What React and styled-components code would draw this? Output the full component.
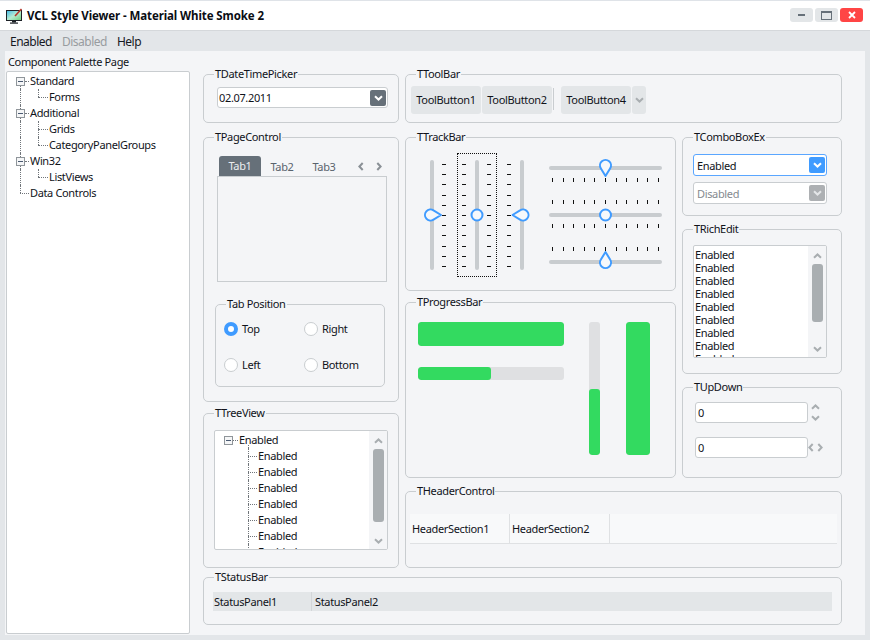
import React from 'react'
import styled, { createGlobalStyle } from 'styled-components'

const BLUE = '#3f9bff'
const LINE = '#c9cdd0'
const PANEL = '#f4f5f7'
const SLATE = '#667079'

const GlobalStyle = createGlobalStyle`
  html, body { margin: 0; padding: 0; background: #e3e6e9; }
  body {
    font-family: "Noto Sans", "Open Sans", sans-serif;
    font-size: 11px;
    letter-spacing: -0.35px;
    color: #10131a;
  }
`

const Window = styled.div`
  width: 870px;
  height: 640px;
  display: flex;
  flex-direction: column;
  background: #e3e6e9;
  overflow: hidden;
`

const TitleBar = styled.div`
  height: 31px;
  flex: none;
  display: flex;
  align-items: center;
  background: #fff;
  border-top: 1px solid #dfe3e8;
  border-bottom: 1px solid #d5d8db;
  padding: 0 7px 0 6px;
  box-sizing: border-box;
`

const Caption = styled.span`
  font-weight: 700;
  font-size: 11.5px;
  margin-left: 4px;
  letter-spacing: -0.1px;
  color: #0a0d14;
`

const WinButtons = styled.div`
  margin-left: auto;
  display: flex;
  gap: 2px;
  margin-top: -1px;
`

const WinButton = styled.div`
  width: 23px;
  height: 14px;
  border-radius: 3px;
  background: ${p => (p.$close ? '#ff4545' : '#e3e6e8')};
  display: flex;
  align-items: center;
  justify-content: center;
`

const MenuBar = styled.div`
  height: 20px;
  flex: none;
  display: flex;
  align-items: center;
  padding-left: 10px;
  gap: 10px;
  font-size: 12px;
  letter-spacing: -0.5px;
`

const MenuItem = styled.span`
  color: ${p => (p.$disabled ? '#989ca0' : '#15181f')};
`

const Client = styled.div`
  flex: 1;
  margin: 0 5px 5px;
  background: ${PANEL};
  display: flex;
  min-height: 0;
`

const Palette = styled.div`
  width: 185px;
  flex: none;
  display: flex;
  flex-direction: column;
`

const PaletteLabel = styled.div`
  height: 20px;
  line-height: 22px;
  padding-left: 3px;
  white-space: nowrap;
`

const TreeBox = styled.div`
  display: flex;
  overflow: hidden;
  background: #fff;
  border: 1px solid ${LINE};
  border-radius: 2px;
  box-sizing: border-box;
  margin-left: ${p => p.$inset || 0}px;
  width: ${p => p.$w}px;
  height: ${p => p.$h}px;
  flex: none;
`

const TreeList = styled.div`
  flex: 1;
  min-width: 0;
  overflow: hidden;
  padding-top: 1px;
`

const TreeRow = styled.div`
  position: relative;
  flex: none;
  height: 16px;
  line-height: 16px;
  padding-left: ${p => p.$x}px;
  white-space: nowrap;
`

const VGuide = styled.i`
  position: absolute;
  width: 0;
  border-left: 1px dotted #70757a;
`

const HGuide = styled.i`
  position: absolute;
  top: 8px;
  height: 0;
  border-top: 1px dotted #70757a;
`

const Expander = styled.i`
  position: absolute;
  top: 4px;
  width: 9px;
  height: 9px;
  box-sizing: border-box;
  border: 1px solid #8f959a;
  background: linear-gradient(#4a5a72, #4a5a72) center / 5px 1px no-repeat #f5f6f7;
`

const ScrollBar = styled.div`
  width: 18px;
  flex: none;
  display: flex;
  flex-direction: column;
  align-items: center;
  padding: 7px 0 5px;
  box-sizing: border-box;
  background: ${PANEL};
`

const ScrollThumb = styled.div`
  width: 11px;
  height: ${p => p.$h}px;
  margin-top: 5px;
  border-radius: 3px;
  background: #a9aeb1;
`

const BarSpring = styled.div`
  flex: 1;
`

const Main = styled.div`
  margin-left: 13px;
  padding-top: 23px;
  width: 639px;
  display: flex;
  flex-direction: column;
  gap: 9px;
`

const TopRow = styled.div`
  display: flex;
  gap: 6px;
`

const MiddleRow = styled(TopRow)`
  margin-top: 14px;
`

const Column = styled.div`
  width: ${p => p.$w}px;
  flex: none;
  display: flex;
  flex-direction: column;
`

const Group = styled.div`
  position: relative;
  flex: none;
  box-sizing: border-box;
  height: ${p => p.$h}px;
  margin-top: ${p => p.$mt || 0}px;
  border: 1px solid ${LINE};
  border-radius: 5px;
  padding: ${p => p.$pad};
`

const Legend = styled.span`
  position: absolute;
  top: -9px;
  left: 10px;
  padding: 0 1px;
  line-height: 15px;
  background: ${PANEL};
  white-space: nowrap;
`

const Field = styled.div`
  display: flex;
  align-items: center;
  justify-content: space-between;
  box-sizing: border-box;
  width: ${p => p.$w}px;
  height: ${p => p.$h}px;
  margin-top: ${p => p.$mt || 0}px;
  background: #fff;
  border: 1px solid ${p => (p.$focus ? '#5aa6ff' : LINE)};
  border-radius: 3px;
  padding: 0 1px 0 ${p => p.$pl || 3}px;
  color: ${p => (p.$disabled ? '#858a8f' : 'inherit')};
`

const DropButton = styled.div`
  width: 16px;
  height: 16px;
  flex: none;
  border-radius: 2px;
  background: ${p => p.$bg};
  display: flex;
  align-items: center;
  justify-content: center;
`

const TabStrip = styled.div`
  display: flex;
  align-items: flex-end;
  height: 20px;
  margin-left: 4px;
`

const Tab = styled.div`
  width: 42px;
  height: 20px;
  line-height: ${p => (p.$active ? 20 : 22)}px;
  text-align: center;
  border-radius: 3px 3px 0 0;
  background: ${p => (p.$active ? SLATE : 'transparent')};
  color: ${p => (p.$active ? '#eceef0' : '#59636d')};
`

const TabArrows = styled.div`
  display: flex;
  align-items: center;
  gap: 12px;
  height: 20px;
  margin-left: 13px;
`

const TabPage = styled.div`
  box-sizing: border-box;
  width: 170px;
  height: 106px;
  margin-left: 2px;
  border: 1px solid ${LINE};
`

const RadioGroup = styled(Group)`
  width: 170px;
  display: grid;
  grid-template-columns: 80px 80px;
  grid-auto-rows: 14px;
  row-gap: 22px;
`

const RadioItem = styled.label`
  display: flex;
  align-items: flex-start;
  gap: 4px;
  line-height: 13px;
  white-space: nowrap;
`

const Radio = styled.span`
  width: 14px;
  height: 14px;
  flex: none;
  box-sizing: border-box;
  border-radius: 50%;
  border: ${p => (p.$on ? `4px solid ${BLUE}` : `1px solid ${LINE}`)};
  background: #fff;
`

const ToolRow = styled.div`
  display: flex;
  gap: 1px;
`

const ToolButton = styled.div`
  width: ${p => p.$w || 70}px;
  height: 28px;
  box-sizing: border-box;
  padding-bottom: 1px;
  border-radius: 3px;
  background: #e3e6e8;
  display: flex;
  align-items: center;
  justify-content: center;
  white-space: nowrap;
`

const ToolSeparator = styled.div`
  width: 1px;
  height: 22px;
  margin: 2px 6px 0 0;
  background: ${LINE};
`

const TrackRow = styled.div`
  display: flex;
  align-items: flex-start;
`

const FocusBox = styled.div`
  width: 40px;
  height: 124px;
  box-sizing: border-box;
  border: 1px dotted #111;
  margin: 0 6px 0 7px;
  display: flex;
  align-items: center;
`

const HTracks = styled.div`
  margin: 5px 0 0 12px;
  display: flex;
  flex-direction: column;
  gap: 14px;
`

const Drawing = styled.svg`
  display: block;
  flex: none;
`

const ProgressRow = styled.div`
  display: flex;
  align-items: flex-start;
`

const ProgressLeft = styled.div`
  width: 146px;
  display: flex;
  flex-direction: column;
  gap: 21px;
`

const ProgressTrack = styled.div`
  overflow: hidden;
  flex: none;
  display: flex;
  flex-direction: ${p => (p.$vertical ? 'column' : 'row')};
  justify-content: flex-end;
  width: ${p => p.$w};
  height: ${p => p.$h}px;
  margin-left: ${p => p.$ml || 0}px;
  border-radius: 3px;
  background: #dfe0e2;
`

const ProgressFill = styled.div`
  background: #33da60;
  border-radius: 3px;
  flex: none;
  margin-right: auto;
`

const RichText = styled.div`
  flex: 1;
  min-width: 0;
  overflow: hidden;
  padding: 2px 0 0 1px;
  line-height: 13px;
`

const SpinRow = styled.div`
  display: flex;
  align-items: center;
  gap: 3px;
  margin-bottom: 14px;
`

const SpinPair = styled.div`
  width: 9px;
  display: flex;
  flex-direction: ${p => (p.$horizontal ? 'row' : 'column')};
  align-items: center;
  justify-content: center;
  gap: ${p => (p.$horizontal ? 3 : 5)}px;
`

const HeaderBar = styled.div`
  display: flex;
  height: 30px;
  background: #f8f9fa;
  border-bottom: 1px solid #dfe1e3;
  box-sizing: border-box;
`

const HeaderSection = styled.div`
  width: 100px;
  box-sizing: border-box;
  padding-left: 2px;
  line-height: 29px;
  border-right: 1px solid #dfe1e3;
`

const StatusBar = styled.div`
  display: flex;
  height: 19px;
  line-height: 19px;
  background: #e3e6e8;
`

const StatusPanel = styled.div`
  width: ${p => (p.$w ? `${p.$w}px` : 'auto')};
  box-sizing: border-box;
  padding-left: ${p => p.$pl}px;
  border-right: ${p => (p.$w ? '1px solid #d3d6d9' : 'none')};
`

// dir is where the point looks at
const Chevron = ({ dir = 'down', color = '#a9aeb1', sw = 2 }) => {
  const rot = { down: 0, up: 180, left: 90, right: -90 }[dir]
  const side = dir === 'left' || dir === 'right'
  return (
    <Drawing width={side ? 6 : 9} height={side ? 9 : 6} viewBox={side ? '0 0 6 9' : '0 0 9 6'}>
      <g transform={side ? `rotate(${rot} 3 4.5) translate(-1.5 1.5)` : `rotate(${rot} 4.5 3)`}>
        <polyline points="1,1.3 4.5,4.6 8,1.3" fill="none" stroke={color} strokeWidth={sw} />
      </g>
    </Drawing>
  )
}

const AppIcon = () => (
  <Drawing width="17" height="16" viewBox="0 0 17 16">
    <defs>
      <linearGradient id="screen" x1="0" y1="0" x2="1" y2="1">
        <stop offset="0" stopColor="#3fb9e8" />
        <stop offset="0.5" stopColor="#b6ecd2" />
        <stop offset="1" stopColor="#6fd07a" />
      </linearGradient>
    </defs>
    <rect x="0.5" y="2.5" width="15" height="10" fill="url(#screen)" stroke="#1c2026" />
    <rect x="6" y="13" width="4" height="1.5" fill="#1c2026" />
    <rect x="4" y="14.5" width="8" height="1.2" fill="#1c2026" />
    <path d="M9 8 L15.5 1" stroke="#b4362b" strokeWidth="1.6" />
  </Drawing>
)

const Thumb = ({ x, y, angle }) => (
  <g transform={`translate(${x} ${y}) rotate(${angle})`}>
    <path
      d="M10.5 0 L3 4.6 A5.5 5.5 0 1 1 3 -4.6 Z"
      fill="#f6f8fb"
      stroke={BLUE}
      strokeWidth="2"
      strokeLinejoin="round"
    />
  </g>
)

const Knob = ({ x, y }) => <circle cx={x} cy={y} r="5.5" fill="#f6f8fb" stroke={BLUE} strokeWidth="2" />

const range11 = [0, 1, 2, 3, 4, 5, 6, 7, 8, 9, 10]
const vTickY = i => Math.round(11 + i * 10.2)
const hTickX = i => Math.round(7 + i * 10.6)

const VTrack = ({ w, track, ticks, children }) => (
  <Drawing width={w} height="124" viewBox={`0 0 ${w} 124`}>
    <rect x={track} y="7" width="4" height="110" rx="2" fill="#c8cccf" />
    {ticks.map(tx =>
      range11.map(i => <rect key={`${tx}-${i}`} x={tx} y={vTickY(i)} width="4" height="1" fill="#111" />)
    )}
    {children}
  </Drawing>
)

const HTrack = ({ h, track, ticks, children }) => (
  <Drawing width="120" height={h} viewBox={`0 0 120 ${h}`}>
    <rect x="4" y={track} width="113" height="4" rx="2" fill="#c8cccf" />
    {ticks.map(ty =>
      range11.map(i => <rect key={`${ty}-${i}`} x={hTickX(i)} y={ty} width="1" height="4" fill="#111" />)
    )}
    {children}
  </Drawing>
)

const Scroll = ({ thumb }) => (
  <ScrollBar>
    <Chevron dir="up" />
    <ScrollThumb $h={thumb} />
    <BarSpring />
    <Chevron dir="down" />
  </ScrollBar>
)

const paletteRows = [
  { text: 'Standard', x: 23, box: 9, v: [[13, 13, 3]], h: [18, 4] },
  { text: 'Forms', x: 42, v: [[13, 0, 16], [31, 0, 8]], h: [31, 10] },
  { text: 'Additional', x: 23, box: 9, v: [[13, 0, 4], [13, 13, 3]], h: [18, 4] },
  { text: 'Grids', x: 42, v: [[13, 0, 16], [31, 0, 16]], h: [31, 10] },
  { text: 'CategoryPanelGroups', x: 42, v: [[13, 0, 16], [31, 0, 8]], h: [31, 10] },
  { text: 'Win32', x: 23, box: 9, v: [[13, 0, 4], [13, 13, 3]], h: [18, 4] },
  { text: 'ListViews', x: 42, v: [[13, 0, 16], [31, 0, 8]], h: [31, 10] },
  { text: 'Data Controls', x: 23, v: [[13, 0, 8]], h: [13, 9] }
]

const viewRows = [
  { text: 'Enabled', x: 24, box: 9, v: [[33, 13, 3]], h: [18, 5] },
  ...[1, 2, 3, 4, 5, 6, 7].map(() => ({ text: 'Enabled', x: 43, v: [[33, 0, 16]], h: [33, 9] }))
]

const Tree = ({ rows }) => (
  <TreeList>
    {rows.map((r, i) => (
      <TreeRow key={i} $x={r.x}>
        {r.v.map(([left, top, height], j) => (
          <VGuide key={j} style={{ left, top, height }} />
        ))}
        <HGuide style={{ left: r.h[0], width: r.h[1] }} />
        {r.box && <Expander style={{ left: r.box }} />}
        {r.text}
      </TreeRow>
    ))}
  </TreeList>
)

const App = () => (
  <Window>
    <GlobalStyle />
    <TitleBar>
      <AppIcon />
      <Caption>VCL Style Viewer - Material White Smoke 2</Caption>
      <WinButtons>
        <WinButton>
          <Drawing width="7" height="2"><rect width="7" height="2" fill={SLATE} /></Drawing>
        </WinButton>
        <WinButton>
          <Drawing width="11" height="9">
            <rect x="0.5" y="0.5" width="10" height="8" fill="none" stroke={SLATE} />
            <rect x="0" y="0" width="11" height="2" fill={SLATE} />
          </Drawing>
        </WinButton>
        <WinButton $close>
          <Drawing width="8" height="8" viewBox="0 0 8 8">
            <path d="M1 1 L7 7 M7 1 L1 7" stroke="#fff" strokeWidth="1.8" />
          </Drawing>
        </WinButton>
      </WinButtons>
    </TitleBar>
    <MenuBar>
      <MenuItem>Enabled</MenuItem>
      <MenuItem $disabled>Disabled</MenuItem>
      <MenuItem>Help</MenuItem>
    </MenuBar>
    <Client>
      <Palette>
        <PaletteLabel>Component Palette Page</PaletteLabel>
        <TreeBox $inset={1} $w={184} $h={563}>
          <Tree rows={paletteRows} />
        </TreeBox>
      </Palette>
      <Main>
        <TopRow>
          <Column $w={196}>
            <Group $h={49} $pad="12px 0 0 13px">
              <Legend>TDateTimePicker</Legend>
              <Field $w={171} $h={21} $pl={1}>
                02.07.2011
                <DropButton $bg={SLATE}><Chevron color="#fff" /></DropButton>
              </Field>
            </Group>
            <Group $h={265} $mt={14} $pad="18px 0 0 11px">
              <Legend>TPageControl</Legend>
              <TabStrip>
                <Tab $active>Tab1</Tab>
                <Tab>Tab2</Tab>
                <Tab>Tab3</Tab>
                <TabArrows>
                  <Chevron dir="left" color="#8a9096" />
                  <Chevron dir="right" color="#8a9096" />
                </TabArrows>
              </TabStrip>
              <TabPage />
              <RadioGroup $h={83} $mt={22} $pad="17px 0 0 8px">
                <Legend>Tab Position</Legend>
                <RadioItem><Radio $on />Top</RadioItem>
                <RadioItem><Radio />Right</RadioItem>
                <RadioItem><Radio />Left</RadioItem>
                <RadioItem><Radio />Bottom</RadioItem>
              </RadioGroup>
            </Group>
            <Group $h={155} $mt={11} $pad="16px 0 0 10px">
              <Legend>TTreeView</Legend>
              <TreeBox $w={174} $h={120}>
                <Tree rows={viewRows} />
                <Scroll thumb={73} />
              </TreeBox>
            </Group>
          </Column>
          <Column $w={437}>
            <Group $h={49} $pad="11px 0 0 5px">
              <Legend>TToolBar</Legend>
              <ToolRow>
                <ToolButton>ToolButton1</ToolButton>
                <ToolButton>ToolButton2</ToolButton>
                <ToolSeparator />
                <ToolButton>ToolButton4</ToolButton>
                <ToolButton $w={14}><Chevron /></ToolButton>
              </ToolRow>
            </Group>
            <MiddleRow>
              <Column $w={271}>
                <Group $h={154} $pad="15px 0 0 14px">
                  <Legend>TTrackBar</Legend>
                  <TrackRow>
                    <VTrack w={30} track={10} ticks={[22]}>
                      <Thumb x={10.5} y={62} angle={0} />
                    </VTrack>
                    <FocusBox>
                      <VTrack w={38} track={17} ticks={[4, 29]}>
                        <Knob x={19} y={62} />
                      </VTrack>
                    </FocusBox>
                    <VTrack w={30} track={17} ticks={[4]}>
                      <Thumb x={20} y={62} angle={180} />
                    </VTrack>
                    <HTracks>
                      <HTrack h={26} track={8} ticks={[20]}>
                        <Thumb x={60.5} y={7.5} angle={90} />
                      </HTrack>
                      <HTrack h={33} track={15} ticks={[2, 26]}>
                        <Knob x={60.5} y={17} />
                      </HTrack>
                      <HTrack h={25} track={15} ticks={[2]}>
                        <Thumb x={60.5} y={17.5} angle={-90} />
                      </HTrack>
                    </HTracks>
                  </TrackRow>
                </Group>
                <Group $h={176} $mt={11} $pad="19px 0 0 12px">
                  <Legend>TProgressBar</Legend>
                  <ProgressRow>
                    <ProgressLeft>
                      <ProgressTrack $w="146px" $h={24}>
                        <ProgressFill style={{ width: '100%' }} />
                      </ProgressTrack>
                      <ProgressTrack $w="146px" $h={13}>
                        <ProgressFill style={{ width: '50%' }} />
                      </ProgressTrack>
                    </ProgressLeft>
                    <ProgressTrack $vertical $w="11px" $h={133} $ml={25}>
                      <ProgressFill style={{ width: '100%', height: '50%' }} />
                    </ProgressTrack>
                    <ProgressTrack $vertical $w="24px" $h={133} $ml={26}>
                      <ProgressFill style={{ width: '100%', height: '100%' }} />
                    </ProgressTrack>
                  </ProgressRow>
                </Group>
              </Column>
              <Column $w={160}>
                <Group $h={79} $pad="16px 0 0 10px">
                  <Legend>TComboBoxEx</Legend>
                  <Field $w={134} $h={22} $focus>
                    Enabled
                    <DropButton $bg={BLUE}><Chevron color="#fff" /></DropButton>
                  </Field>
                  <Field $w={134} $h={22} $mt={6} $disabled>
                    Disabled
                    <DropButton $bg="#adb0b3"><Chevron color="#e4e6e8" /></DropButton>
                  </Field>
                </Group>
                <Group $h={145} $mt={13} $pad="15px 0 0 10px">
                  <Legend>TRichEdit</Legend>
                  <TreeBox $w={134} $h={113}>
                    <RichText>
                      {[...Array(9).keys()].map(i => <div key={i}>Enabled</div>)}
                    </RichText>
                    <Scroll thumb={58} />
                  </TreeBox>
                </Group>
                <Group $h={91} $mt={13} $pad="14px 0 0 12px">
                  <Legend>TUpDown</Legend>
                  <SpinRow>
                    <Field $w={113} $h={21} $pl={2}>0</Field>
                    <SpinPair>
                      <Chevron dir="up" />
                      <Chevron dir="down" />
                    </SpinPair>
                  </SpinRow>
                  <SpinRow>
                    <Field $w={113} $h={21} $pl={2}>0</Field>
                    <SpinPair $horizontal>
                      <Chevron dir="left" />
                      <Chevron dir="right" />
                    </SpinPair>
                  </SpinRow>
                </Group>
              </Column>
            </MiddleRow>
            <Group $h={77} $mt={13} $pad="22px 4px 0 4px">
              <Legend>THeaderControl</Legend>
              <HeaderBar>
                <HeaderSection>HeaderSection1</HeaderSection>
                <HeaderSection>HeaderSection2</HeaderSection>
              </HeaderBar>
            </Group>
          </Column>
        </TopRow>
        <Group $h={48} $pad="14px 9px 0 9px">
          <Legend>TStatusBar</Legend>
          <StatusBar>
            <StatusPanel $w={99} $pl={1}>StatusPanel1</StatusPanel>
            <StatusPanel $pl={3}>StatusPanel2</StatusPanel>
          </StatusBar>
        </Group>
      </Main>
    </Client>
  </Window>
)

export default App
